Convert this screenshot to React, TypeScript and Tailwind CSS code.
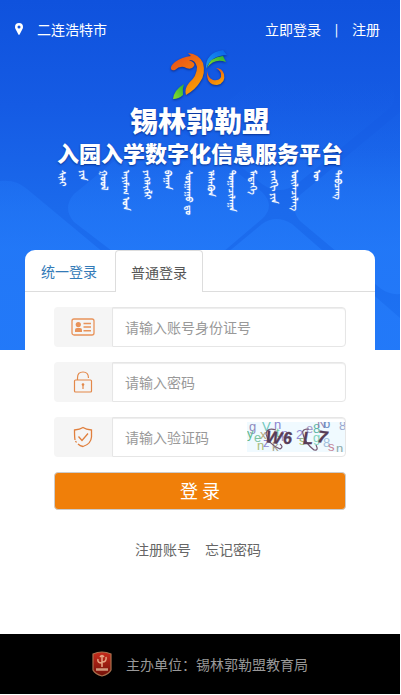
import type { ReactNode } from 'react';

const mongolian = [
  'ᠰᠢᠯᠢ', 'ᠶᠢᠨ', 'ᠭᠣᠣᠯ', 'ᠠᠶᠢᠮᠠᠭ ᠤᠨ', 'ᠶᠡᠬᠡᠯᠢᠭᠯᠢ', 'ᠪᠠᠭᠠᠨ', 'ᠰᠤᠷᠭᠠᠭᠤ ᠳᠤ',
  'ᠡᠯᠰᠡᠬᠦᠨ', 'ᠲᠣᠭᠠᠴᠢᠯᠠᠭᠠ', 'ᠮᠡᠳᠡᠭᠡ', 'ᠵᠠᠩᠭᠢ ᠶᠢᠨ', 'ᠦᠢᠯᠡᠴᠢᠯᠡᠭ', 'ᠦ', 'ᠲᠠᠪᠴᠠᠩ',
];

function Backdrop() {
  return (
    <svg className="absolute inset-0 h-full w-full" viewBox="0 0 400 350" preserveAspectRatio="none" aria-hidden="true">
      <defs>
        <linearGradient id="sky" x1="0" y1="0" x2="0" y2="1">
          <stop offset="0" stopColor="#0f52dd" />
          <stop offset="0.3" stopColor="#155be4" />
          <stop offset="0.6" stopColor="#1b6aec" />
          <stop offset="1" stopColor="#1d73f4" />
        </linearGradient>
        <linearGradient id="tile" gradientUnits="userSpaceOnUse" x1="0" y1="80" x2="0" y2="250">
          <stop offset="0" stopColor="#247bfa" stopOpacity="0" />
          <stop offset="0.4" stopColor="#247bfa" stopOpacity="0.12" />
          <stop offset="0.7" stopColor="#247bfa" stopOpacity="0.45" />
          <stop offset="1" stopColor="#247bfa" stopOpacity="0.75" />
        </linearGradient>
      </defs>
      <rect width="400" height="350" fill="url(#sky)" />
      <g fill="url(#tile)">
        <path d="M0 181Q16 179 27 189L110 258L200 350H0Z" />
        <path d="M74 194L140 140Q168 122 196 140L262 192Q276 206 262 219L190 280H150L74 222Q62 208 74 194Z" />
        <path d="M300 195L400 112V294Q389 295 380 288L300 221Q289 208 300 195Z" />
        <path d="M206 118L265 72Q330 62 388 80Q400 94 390 108L297 184Q279 196 262 184L206 138Q190 128 206 118Z" />
        <path d="M262 224Q276 214 292 224L400 318V350H110Z" />
      </g>
    </svg>
  );
}

function HorseLogo() {
  return (
    <svg className="h-[52px] w-[60px] drop-shadow-[0_1px_1px_rgba(0,0,60,0.5)]" viewBox="0 0 60 52" aria-label="锡林郭勒盟" role="img">
      <defs>
        <linearGradient id="horse" x1="0" y1="0" x2="0.6" y2="1">
          <stop offset="0" stopColor="#e8481c" />
          <stop offset="0.5" stopColor="#f0700f" />
          <stop offset="1" stopColor="#f99d05" />
        </linearGradient>
        <linearGradient id="leaf" x1="0" y1="1" x2="1" y2="0">
          <stop offset="0" stopColor="#8be02a" />
          <stop offset="1" stopColor="#2bae3a" />
        </linearGradient>
        <linearGradient id="wing" x1="0" y1="1" x2="1" y2="0">
          <stop offset="0" stopColor="#1aa0ee" />
          <stop offset="1" stopColor="#0a62ea" />
        </linearGradient>
      </defs>
      <path d="M1 19Q0 16 5 12Q12 7 21 6L18 3Q29 4 33 13Q36 24 30 32Q26 39 16 45Q14 39 19 33Q27 26 27 17Q25 9 19 10Q26 13 24 16Q21 21 14 17Q9 16 5 20Q2 21 1 19Z" fill="url(#horse)" />
      <path d="M14 34Q4 40 3 49Q9 49 13 45Q12 39 14 34Z" fill="url(#leaf)" />
      <path d="M36 19Q35 3 53 0L57 5Q41 5 36 19Z" fill="url(#wing)" />
      <path d="M37 18Q40 7 53 6L56 12Q44 8 37 18Z" fill="url(#leaf)" />
      <path d="M37 21Q36 35 47 35Q56 33 54 24Q52 18 46 18Q52 21 51 27Q49 31 43 30Q38 28 37 21Z" fill="url(#horse)" />
    </svg>
  );
}

function IdCardIcon() {
  return (
    <svg width="24" height="24" viewBox="0 0 24 24" fill="none" stroke="#e8935a" aria-hidden="true">
      <rect x="1" y="4" width="22" height="16" rx="2" strokeWidth="1.3" />
      <circle cx="7.3" cy="9.6" r="2.6" fill="#e8935a" stroke="none" />
      <path d="M4 17v-2q0-2 2-2h3q2 0 2 2v2z" fill="#e8935a" stroke="none" />
      <path d="M12.5 8.5h7.5M12.5 12h7.5M12.5 15.8h7.5" strokeWidth="1.5" />
    </svg>
  );
}

function LockIcon() {
  return (
    <svg width="24" height="24" viewBox="0 0 24 24" fill="none" stroke="#e38849" strokeWidth="1.2" aria-hidden="true">
      <rect x="3.5" y="10" width="17" height="12" rx="1" />
      <path d="M6.500 10V8Q6.500 2 12 2Q17.500 2 17.500 8M12 15v4" />
      <circle cx="12" cy="14.5" r="1.300" fill="#e38849" stroke="none" />
    </svg>
  );
}

function ShieldIcon() {
  return (
    <svg width="24" height="24" viewBox="0 0 24 24" fill="none" stroke="#e07f3d" strokeWidth="1.3" aria-hidden="true">
      <path d="M4 15Q3.500 12 3.500 5Q9 4.500 12 2.500Q15 4.500 20.500 5V12Q20 19 12 21.500Q9 21 7 19M5.500 17.500L4.500 16" />
      <path d="M7.500 11.500L11 15.500L17 8.500" />
    </svg>
  );
}

const noise: [string, number, number, string][] = [
  ['g', 2, 9, '#8f8bbd'], ['V', 15, 9, '#6fc7bb'], ['n', 27, 7, '#8c83cf'],
  ['y', 0, 16, '#62b98e'], ['e', 7, 20, '#7cc4a2'], ['x', 13, 17, '#b5a77b'],
  ['t', 29, 15, '#78c9a4'], ['p', 34, 16, '#9b8ed0'], ['n', 10, 28, '#a9bd78'],
  ['z', 16, 25, '#918ad2'], ['k', 25, 29, '#a8a38b'], ['2', 49, 17, '#9188d4'],
  ['e', 59, 11, '#a59aca'], ['8', 66, 11, '#60b7a4'], ['s', 52, 23, '#9fba72'],
  ['g', 66, 20, '#82d3bc'], ['N', 70, 6, '#9782ac'], ['b', 76, 6, '#6b8dc3'],
  ['8', 92, 8, '#9aa7ce'], ['8', 76, 25, '#9fc0dd'], ['s', 81, 29, '#c58195'],
  ['n', 89, 31, '#8ca9a9'],
];

function Captcha() {
  return (
    <svg className="h-[30px] w-[98px] shrink-0" viewBox="0 0 98 30" role="img" aria-label="验证码" fontFamily="'Liberation Sans', sans-serif">
      <rect width="98" height="30" fill="#f0faff" />
      <g fontSize="13">
        {noise.map(([ch, x, y, color], i) => (
          <text key={i} x={x} y={y} fill={color}>{ch}</text>
        ))}
      </g>
      <g fill="none" stroke="#72566f" strokeWidth="1.2">
        <path d="M29 8Q20 5 19 12Q21 22 33 27Q37 25 33 22" />
        <path d="M62 7Q54 7 56 12Q58 21 67 28Q72 29 69 23" />
      </g>
      <g fill="#573c57" stroke="#573c57" strokeWidth="0.4" fontWeight="bold" fontStyle="italic">
        <text x="18" y="20" fontSize="17" transform="rotate(8 18 20)">W</text>
        <text x="36" y="22" fontSize="16">6</text>
        <text x="56" y="22" fontSize="16">L</text>
        <text x="70" y="20" fontSize="17" transform="rotate(8 70 20)">7</text>
      </g>
    </svg>
  );
}

function Emblem() {
  return (
    <svg width="20" height="26" viewBox="0 0 20 26" aria-hidden="true">
      <defs>
        <linearGradient id="emblem" x1="0" y1="0" x2="0" y2="1">
          <stop offset="0" stopColor="#c92c1c" />
          <stop offset="1" stopColor="#701008" />
        </linearGradient>
      </defs>
      <path d="M1 3Q10 -1 19 3V19Q17 23 10 25Q3 23 1 19Z" fill="url(#emblem)" stroke="#a9714e" strokeWidth="1.2" />
      <path d="M10 16V4M10 12Q5 12 6 8M10 11Q15 11 14 6M8 6Q10 3 12 6" fill="none" stroke="#e7a886" strokeWidth="1.5" />
      <path d="M4 18.500H16" stroke="#d19a7e" strokeWidth="2.500" />
    </svg>
  );
}

function Field({ id, label, type, icon, children }: { id: string; label: string; type: string; icon: ReactNode; children?: ReactNode }) {
  return (
    <div className="flex h-10">
      <label htmlFor={id} aria-label={label} className="flex w-[58px] shrink-0 items-center justify-center rounded-l bg-[#f5f5f5]">
        {icon}
      </label>
      <div className="flex min-w-0 flex-1 items-center rounded-r border border-[#e6e6e6] bg-white shadow-[inset_0_1px_1px_rgba(0,0,0,0.075)]">
        <input id={id} type={type} placeholder={label} className="min-w-0 flex-1 bg-transparent pl-3 text-sm outline-none placeholder:text-[#999]" />
        {children}
      </div>
    </div>
  );
}

export default function App() {
  return (
    <div className="flex min-h-screen flex-col bg-white pr-px pb-px font-['Noto_Sans_CJK_SC',sans-serif] text-sm">
      <header className="relative h-[350px] text-white">
        <Backdrop />
        <div className="relative">
          <nav className="flex h-12 items-center justify-between pt-2.5 pr-5 pl-[15px]">
            <a href="#city" className="flex items-center">
              <svg width="8" height="12" viewBox="0 0 8 12" fill="currentColor" aria-hidden="true">
                <path fillRule="evenodd" d="M4 0a4 4 0 0 1 4 4q0 1-.4 1.800L4.600 11.600q-.6.800-1.200 0L.4 5.800Q0 5 0 4a4 4 0 0 1 4-4M4 2.500a1.500 1.500 0 1 0 0 3a1.500 1.500 0 0 0 0-3" />
              </svg>
              <span className="ml-3.5">二连浩特市</span>
            </a>
            <div className="flex items-center">
              <a href="#login">立即登录</a>
              <span className="w-[31px] text-center text-xs font-medium">|</span>
              <a href="#register">注册</a>
            </div>
          </nav>
          <div className="flex flex-col items-center pt-0.5">
            <HorseLogo />
            <h1 className="flex flex-col items-center font-black text-shadow-[0_1px_2px_rgba(0,20,90,0.6)]">
              <span className="text-[28px] leading-[36px]">锡林郭勒盟</span>
              <span className="text-[22px] leading-[28px]">入园入学数字化信息服务平台</span>
            </h1>
            <div className="mt-1 flex w-[286px] justify-between text-[9px] leading-[10px] text-shadow-[0_0_1px_#fff]">
              {mongolian.map((word) => (
                <span key={word} lang="mn" className="[writing-mode:vertical-lr]">{word}</span>
              ))}
            </div>
          </div>
        </div>
      </header>

      <main className="relative -mt-[100px] mx-[25px] flex-1 rounded-t-[10px] bg-white">
        <div role="tablist" className="flex h-[42px] gap-0.5 border-b border-[#ddd]">
          <button role="tab" type="button" aria-selected="false" className="w-[88px] text-[#337ab7]">统一登录</button>
          <button role="tab" type="button" aria-selected="true" className="-mb-px w-[88px] rounded-t border border-b-0 border-[#ddd] bg-white text-[#555]">普通登录</button>
        </div>
        <form className="flex flex-col gap-[15px] px-[29px] pt-[15px]">
          <Field id="account" label="请输入账号身份证号" type="text" icon={<IdCardIcon />} />
          <Field id="password" label="请输入密码" type="password" icon={<LockIcon />} />
          <Field id="code" label="请输入验证码" type="text" icon={<ShieldIcon />}>
            <Captcha />
          </Field>
          <button type="button" className="h-[38px] rounded border border-[#ccc] bg-[#f07f09] pb-0.5 text-lg leading-none text-white">登 录</button>
        </form>
        <div className="mt-[29px] flex justify-center gap-3.5 pr-1 text-[#666]">
          <a href="#register">注册账号</a>
          <a href="#forgot">忘记密码</a>
        </div>
      </main>

      <footer className="flex h-[60px] items-center justify-center gap-3.5 bg-black text-[#999]">
        <Emblem />
        <span>主办单位：锡林郭勒盟教育局</span>
      </footer>
    </div>
  );
}
